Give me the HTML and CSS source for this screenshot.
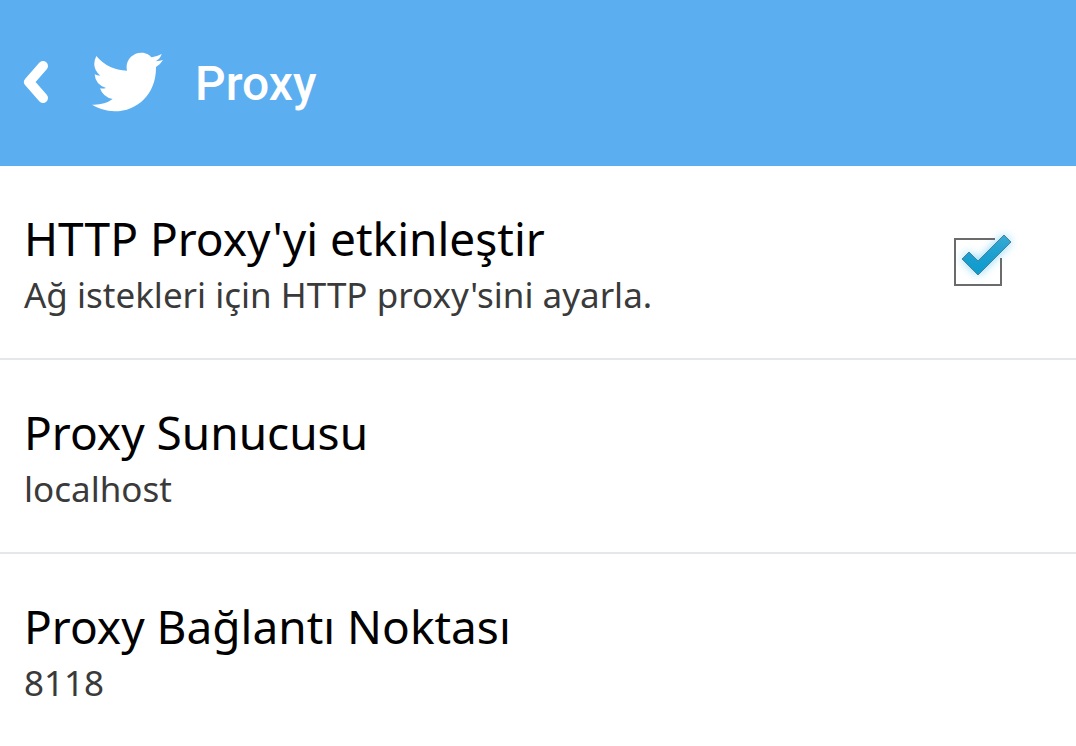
FILE: index.html
```html
<!DOCTYPE html>
<html lang="tr">
<head>
    <meta charset="UTF-8">
    <meta name="viewport" content="width=device-width, initial-scale=1.0">
    <title>Proxy</title>
    <link rel="stylesheet" href="styles.css">
</head>
<body>
    <header class="topbar">
        <button class="back" type="button" aria-label="Geri">
            <svg width="28" height="44" viewBox="0 0 28 44">
                <path d="M22 6 L8 22 L22 38" fill="none" stroke="#fff" stroke-width="10" stroke-linecap="round" stroke-linejoin="round"/>
            </svg>
        </button>
        <svg class="bird" viewBox="24 24 213 180" aria-hidden="true">
            <path fill="#fff" d="M24 182 Q60 184 86 165 Q57 160 48 133 Q56 135 66 132 Q34 122 32 91 Q40 95 49 95 Q20 70 37 36 Q72 78 129 80 C122 50 145 26 172 26 C188 26 197 34 203 40 Q220 37 233 30 Q229 44 215 52 Q228 51 237 48 Q230 60 216 69 C217 150 160 202 92 202 Q52 200 24 182 Z"/>
        </svg>
        <h1>Proxy</h1>
    </header>

    <main class="settings">
        <label class="row" for="enable">
            <span class="text">
                <span class="title">HTTP Proxy'yi etkinleştir</span>
                <span class="summary">Ağ istekleri için HTTP proxy'sini ayarla.</span>
            </span>
            <span class="check">
                <input type="checkbox" id="enable" checked>
                <svg viewBox="0 0 90 80" aria-hidden="true">
                    <defs>
                        <linearGradient id="tick" x1="0" y1="0" x2="0" y2="1">
                            <stop offset="0" stop-color="#3aa9d4"/>
                            <stop offset="0.5" stop-color="#1b9fd0"/>
                            <stop offset="1" stop-color="#0b9ccd"/>
                        </linearGradient>
                        <filter id="glow" x="-50%" y="-50%" width="200%" height="200%">
                            <feGaussianBlur stdDeviation="5"/>
                        </filter>
                    </defs>
                    <path class="mark" d="M26 39 L33 32 L42 41 L68 15 L75 22 L42 55 Z" fill="#7fd3f5" filter="url(#glow)"/>
                    <path d="M59 19 H19 V65 H65 V38" fill="none" stroke="#6b6b6b" stroke-width="2"/>
                    <path class="mark" d="M26 39 L33 32 L42 41 L68 15 L75 22 L42 55 Z" fill="url(#tick)" stroke="#4f7f92" stroke-width="1" stroke-linejoin="round"/>
                </svg>
            </span>
        </label>
        <button class="row" type="button">
            <span class="text">
                <span class="title">Proxy Sunucusu</span>
                <span class="summary">localhost</span>
            </span>
        </button>
        <button class="row" type="button">
            <span class="text">
                <span class="title">Proxy Bağlantı Noktası</span>
                <span class="summary">8118</span>
            </span>
        </button>
    </main>
</body>
</html>
```

FILE: styles.css
```css
* {
    box-sizing: border-box;
}
body {
    margin: 0;
    background: #fff;
    color: #000;
    font-family: "Noto Sans", sans-serif;
}
.topbar {
    display: flex;
    align-items: center;
    padding: 50px 21px 52px;
    background: #5baef0;
    color: #fff;
}
.back {
    display: flex;
    padding: 0;
    border: none;
    background: none;
    cursor: pointer;
}
.bird {
    width: 71px;
    height: 60px;
    margin: 0 32px 0 43px;
}
.topbar h1 {
    margin: 0;
    padding-top: 4px;
    font-family: Roboto, sans-serif;
    font-size: 48px;
    font-weight: 500;
    line-height: 60px;
}
.settings {
    display: flex;
    flex-direction: column;
}
.row {
    display: flex;
    align-items: flex-start;
    justify-content: space-between;
    padding: 0 50px 0 24px;
    border: none;
    border-bottom: 2px solid #e4e7eb;
    background: none;
    color: inherit;
    font-family: inherit;
    text-align: left;
    cursor: pointer;
}
.row:last-child {
    border-bottom: none;
}
.text {
    display: flex;
    flex-direction: column;
    padding: 40px 0 38px;
}
.title {
    font-size: 46px;
    line-height: 64px;
}
.summary {
    color: #3a3a3a;
    font-size: 35px;
    line-height: 50px;
}
.check {
    position: relative;
    width: 90px;
    height: 80px;
    margin-top: 54px;
}
.check input {
    position: absolute;
    inset: 0;
    width: 100%;
    height: 100%;
    margin: 0;
    opacity: 0;
    cursor: pointer;
}
.check svg {
    display: block;
    width: 100%;
    height: 100%;
    pointer-events: none;
}
.check input:not(:checked) + svg .mark {
    display: none;
}
```
